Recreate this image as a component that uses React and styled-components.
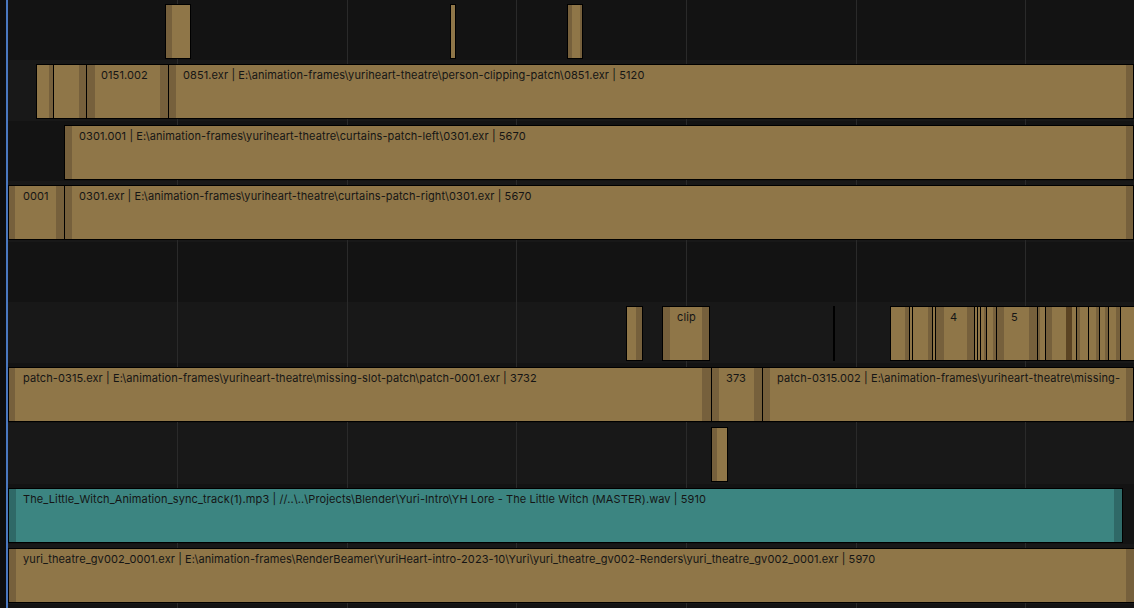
import React from "react";
import styled, { createGlobalStyle } from "styled-components";

const GlobalStyle = createGlobalStyle`
  html, body {
    margin: 0;
    padding: 0;
    background: #131313;
    overflow: hidden;
  }
  body {
    font-family: Inter, "Noto Sans", sans-serif;
  }
`;

const COLORS = {
  image: { body: "#8f7648", handle: "#76603c" },
  sound: { body: "#3c8581", handle: "#2f6967" },
};

const Editor = styled.div`
  display: flex;
  width: 1134px;
  height: 608px;
  overflow: hidden;
  background: #131313;
`;

const Gutter = styled.div`
  flex: none;
  width: 6px;
  background: #0e0e0e;
`;

const StartLine = styled.div`
  flex: none;
  width: 2px;
  background: #4a78bf;
`;

const Timeline = styled.div`
  position: relative;
  flex: 1;
  display: flex;
  flex-direction: column;
`;

const Channel = styled.div`
  position: relative;
  flex: none;
  height: 60.44px;
  background: ${(p) => (p.$odd ? "#181818" : "#131313")};
`;

const GridLine = styled.div.attrs((p) => ({ style: { left: p.$x } }))`
  position: absolute;
  top: 0;
  bottom: 0;
  width: 1px;
  background: #2a2a2a;
  z-index: 1;
  pointer-events: none;
`;

const handleFill = (p) => {
  const c = COLORS[p.$kind || "image"];
  const layers = [];
  if (p.$band) {
    layers.push(
      `linear-gradient(to right, transparent ${p.$band[0]}px, #5b4323 ${p.$band[0]}px, #5b4323 ${p.$band[1]}px, transparent ${p.$band[1]}px)`
    );
  }
  layers.push(
    `linear-gradient(to right, ${c.handle} 0, ${c.handle} ${p.$lh || 0}px, ${c.body} ${p.$lh || 0}px, ${c.body} calc(100% - ${p.$rh || 0}px), ${c.handle} calc(100% - ${p.$rh || 0}px))`
  );
  return layers.join(", ");
};

const Strip = styled.div.attrs((p) => ({ style: { left: p.$x, width: p.$w } }))`
  position: absolute;
  top: 4px;
  height: 55px;
  box-sizing: border-box;
  border: 1px solid #000;
  background: ${handleFill};
  z-index: 2;
  overflow: hidden;
`;

const Label = styled.div`
  padding: 4px 0 0 14px;
  font-size: 11px;
  line-height: 13px;
  letter-spacing: 0.1px;
  color: #151515;
  white-space: nowrap;
  overflow: hidden;
`;

const Cut = styled.div.attrs((p) => ({ style: { left: p.$x } }))`
  position: absolute;
  top: 4px;
  height: 55px;
  width: 2px;
  background: #000;
  z-index: 2;
`;

const GRID = [177, 347, 516, 686, 856, 1025];

// [left border x, right border x, left handle, right handle, label, extra]
const CHANNELS = [
  [
    [165, 190, 6, 0],
    [450, 455, 0, 0],
    [567, 582, 4, 2],
  ],
  [
    [36, 53, 0, 4],
    [53, 86, 0, 7],
    [86, 168, 8, 8, "0151.002"],
    [168, 1133, 7, 7, "0851.exr | E:\\animation-frames\\yuriheart-theatre\\person-clipping-patch\\0851.exr | 5120"],
  ],
  [
    [64, 1133, 7, 7, "0301.001 | E:\\animation-frames\\yuriheart-theatre\\curtains-patch-left\\0301.exr | 5670"],
  ],
  [
    [8, 64, 6, 8, "0001"],
    [64, 1133, 7, 7, "0301.exr | E:\\animation-frames\\yuriheart-theatre\\curtains-patch-right\\0301.exr | 5670"],
  ],
  [],
  [
    [626, 642, 0, 6],
    [662, 709, 7, 7, "clip"],
    [833, 834, 0, 0, null, { cut: true }],
    [890, 909, 0, 4],
    [909, 912, 0, 0],
    [912, 932, 0, 4],
    [932, 935, 0, 0],
    [935, 974, 8, 7, "4"],
    [974, 977, 0, 0],
    [977, 980, 0, 0],
    [980, 986, 0, 2],
    [986, 996, 0, 3],
    [996, 1037, 7, 8, "5"],
    [1037, 1045, 2, 0],
    [1045, 1076, 6, 0, null, { band: [20, 26] }],
    [1076, 1088, 3, 0],
    [1088, 1099, 0, 3],
    [1099, 1108, 0, 3],
    [1108, 1120, 0, 4],
    [1120, 1136, 0, 0],
  ],
  [
    [8, 711, 6, 9, "patch-0315.exr | E:\\animation-frames\\yuriheart-theatre\\missing-slot-patch\\patch-0001.exr | 3732"],
    [711, 762, 7, 8, "373"],
    [762, 1133, 7, 7, "patch-0315.002 | E:\\animation-frames\\yuriheart-theatre\\missing-"],
  ],
  [[711, 727, 5, 0]],
  [
    [8, 1122, 7, 8, "The_Little_Witch_Animation_sync_track(1).mp3 | //..\\..\\Projects\\Blender\\Yuri-Intro\\YH Lore - The Little Witch (MASTER).wav | 5910", { kind: "sound" }],
  ],
  [
    [8, 1134, 7, 8, "yuri_theatre_gv002_0001.exr | E:\\animation-frames\\RenderBeamer\\YuriHeart-intro-2023-10\\Yuri\\yuri_theatre_gv002-Renders\\yuri_theatre_gv002_0001.exr | 5970"],
  ],
];

const ORIGIN = 8;

const App = () => {
  return (
    <>
      <GlobalStyle />
      <Editor>
        <Gutter />
        <StartLine />
        <Timeline>
          {GRID.map((x) => (
            <GridLine key={x} $x={x - ORIGIN} />
          ))}
          {CHANNELS.map((strips, i) => (
            <Channel key={i} $odd={i % 2 === 1}>
              {strips.map((s, j) => {
                const [x1, x2, lh, rh, label] = s;
                const extra = typeof s[4] === "object" && s[4] ? s[4] : s[5] || {};
                if (extra.cut) return <Cut key={j} $x={x1 - ORIGIN} />;
                return (
                  <Strip
                    key={j}
                    $x={x1 - ORIGIN}
                    $w={x2 - x1 + 1}
                    $lh={lh}
                    $rh={rh}
                    $kind={extra.kind}
                    $band={extra.band}
                  >
                    {typeof label === "string" && <Label>{label}</Label>}
                  </Strip>
                );
              })}
            </Channel>
          ))}
        </Timeline>
      </Editor>
    </>
  );
};

export default App;
